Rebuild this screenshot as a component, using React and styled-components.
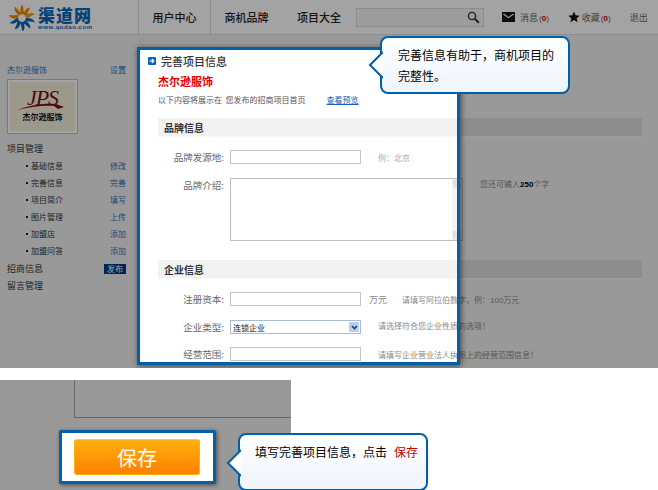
import React from 'react';
import styled, { createGlobalStyle } from 'styled-components';

const Global = createGlobalStyle`
  html, body { margin: 0; padding: 0; background: #fff; }
  body { font-family: "Noto Sans CJK SC", "Liberation Sans", sans-serif; width: 658px; height: 490px; overflow: hidden; }
  * { box-sizing: border-box; }
`;

const Shot = styled.div`position: relative; width: 658px; height: 368px; overflow: hidden;`;
const Page = styled.div`width: 658px; height: 368px; background: #f0f0f0;`;
const Dim = styled.div`position: absolute; inset: 0; background: rgba(0,0,0,.36);`;

const Header = styled.header`display: flex; align-items: stretch; height: 35px; background: #fff; border-bottom: 1px solid #ddd;`;
const Brand = styled.div`flex: none; display: flex; gap: 3px; width: 138px; padding: 5px 0 0 9px;`;
const BrandText = styled.div`display: flex; flex-direction: column;`;
const BrandName = styled.div`font-size: 17px; line-height: 17px; font-weight: 900; color: #0868b8; letter-spacing: 1px; margin-top: 1px;`;
const BrandUrl = styled.div`font-family: "Liberation Sans", sans-serif; font-size: 6px; line-height: 7px; margin-top: 1px; font-weight: 700; color: #0868b8; letter-spacing: .55px;`;
const NavItem = styled.div`flex: none; display: flex; align-items: center; justify-content: center; width: ${p => p.$w}px; border-left: ${p => p.$line ? '1px solid #ddd' : 'none'}; font-size: 11px; font-weight: 500; color: #222;`;
const SearchBox = styled.div`flex: none; display: flex; align-items: center; justify-content: flex-end; width: 128px; height: 19px; margin-top: 8px; padding-right: 3px; border: 1px solid #ddd; background: #f6f6f6;`;
const Tool = styled.div`flex: none; display: flex; align-items: center; gap: ${p => p.$gap || 0}px; margin-left: ${p => p.$ml}px; font-size: 9px; color: #666; white-space: nowrap;`;
const Count = styled.span`font-family: "Liberation Sans", sans-serif; font-size: 8px; margin-left: 1px; color: #666;`;
const Zero = styled.b`color: #d00000;`;

const Body = styled.div`display: flex;`;
const Side = styled.aside`flex: none; width: 140px; padding: 26px 14px 0 7px;`;
const SideRow = styled.div`display: flex; justify-content: space-between; align-items: center; height: 17px; margin-top: ${p => p.$mt || 0}px; padding-left: ${p => p.$sub ? 19 : 0}px; font-size: ${p => p.$sub ? 8 : 9}px; color: #333;`;
const Bullet = styled.span`display: flex; align-items: center; gap: 3px; &::before { content: ""; display: block; width: 2px; height: 2px; background: #222; }`;
const SideLink = styled.span`font-size: 8px; color: #3370b5;`;
const Badge = styled.span`display: flex; justify-content: center; align-items: center; width: 22px; height: 10px; font-size: 8px; background: #003a8c; color: #fff;`;
const LogoBox = styled.div`display: flex; align-items: center; justify-content: center; width: 71px; height: 55px; margin: 1px 0 6px; border: 1px solid #d8b8a8; background: #fff;`;
const LogoInner = styled.div`position: relative; display: flex; flex-direction: column; align-items: center; width: 65px; height: 49px; padding-top: 7px; background: #f5f0dc;`;
const LogoMark = styled.div`font-family: "Liberation Serif", serif; font-style: italic; font-size: 22px; line-height: 18px; letter-spacing: -1px; color: #7a1010;`;
const LogoSwoosh = styled.svg`position: absolute; left: 6px; top: 16px;`;
const LogoName = styled.div`font-size: 8px; line-height: 10px; font-weight: 700; color: #111; margin-top: 5px;`;

const Main = styled.main`padding: 83px 0 0 18px;`;

const FormWrap = styled.div`width: 484px;`;
const Section = styled.h3`display: flex; align-items: center; height: 19px; margin: 0; padding-left: 6px; background: ${p => p.$under ? '#dedede' : '#f2f2f2'}; border-bottom: 1px solid #f8f8f8; font-size: 10px; font-weight: 700; color: #333;`;
const Row = styled.div`display: flex; align-items: ${p => p.$start ? 'flex-start' : 'center'}; margin-top: ${p => p.$mt}px; height: ${p => p.$h || 14}px;`;
const Label = styled.label`flex: none; width: 66px; margin-right: 6px; text-align: right; font-size: 9.5px; line-height: 14px; color: #666; white-space: nowrap;`;
const Input = styled.div`flex: none; width: 131px; height: 14px; border: 1px solid #c4c4c4; background: #fff;`;
const Select = styled.div`flex: none; display: flex; align-items: center; justify-content: space-between; width: 131px; height: 14px; padding: 0 1px 0 2px; border: 1px solid #a8bcd4; background: #fff; font-size: 8px; color: #111;`;
const SelectBtn = styled.span`display: flex; align-items: center; justify-content: center; width: 10px; height: 10px; background: #b8cef0; border-radius: 1px;`;
const TextBox = styled.div`flex: none; position: relative; width: 233px; height: 63px; border: 1px solid #c0c0c0; background: #fff;`;
const Scroll = styled.div`position: absolute; top: 0; right: 0; bottom: 0; width: 10px; display: flex; flex-direction: column; justify-content: space-between; background: #f4f4f4;`;
const ScrollBtn = styled.span`display: block; height: 10px; background: #e2e2e2; border: 1px solid #eee;`;
const Unit = styled.span`flex: none; width: 18px; margin-left: 8px; font-size: 9px; color: #888;`;
const Hint = styled.span`flex: none; margin-left: ${p => p.$ml}px; margin-top: ${p => p.$mt || 0}px; font-size: 8px; color: ${p => p.$light ? '#aaa' : '#888'}; white-space: nowrap; visibility: ${p => p.$off ? 'hidden' : 'visible'};`;
const Strong = styled.b`font-family: "Liberation Sans", sans-serif; color: #000;`;
const Tight = styled.span`letter-spacing: -2px; margin-right: 2px;`;
const Num = styled.span`font-family: "Liberation Sans", sans-serif;`;

const Form = ({ under }) => {
  const t = s => (under ? '' : s);
  return (
    <FormWrap>
      <Section $under={under}>{t('品牌信息')}</Section>
      <Row $mt={13}><Label>{t('品牌发源地:')}</Label><Input /><Hint $ml={17} $light>{t('例：北京')}</Hint></Row>
      <Row $mt={14} $h={63} $start>
        <Label>{t('品牌介绍:')}</Label>
        <TextBox><Scroll><ScrollBtn /><ScrollBtn /></Scroll></TextBox>
        <Hint $ml={17} $off={!under}>您还可输入<Strong>250</Strong>个字</Hint>
      </Row>
      <Row $mt={19} $h={19}><Section as="div" $under={under} style={{ width: '100%' }}>{t('企业信息')}</Section></Row>
      <Row $mt={13}><Label>{t('注册资本:')}</Label><Input /><Unit>{t('万元')}</Unit><Hint $ml={15}>请填写阿拉伯数字<Tight>，</Tight>例<Tight>：</Tight><Num>100</Num>万元</Hint></Row>
      <Row $mt={14}>
        <Label>{t('企业类型:')}</Label>
        <Select>{t('连锁企业')}<SelectBtn><svg width="7" height="5" viewBox="0 0 7 5"><path d="M1 1l2.5 2.5L6 1" fill="none" stroke="#1a3a78" strokeWidth="1.6" /></svg></SelectBtn></Select>
        <Hint $ml={17} $mt={-3}>请选择符合您企业性质的选项！</Hint>
      </Row>
      <Row $mt={13}><Label>{t('经营范围:')}</Label><Input /><Hint $ml={17}>请填写企业营业法人执照上的经营范围信息！</Hint></Row>
    </FormWrap>
  );
};

const Modal = styled.section`position: absolute; left: 137px; top: 47px; width: 323px; height: 318px; padding: 5px 0 0 18px; overflow: hidden; background: #fff; border: 3px solid #0061a8; box-shadow: 1px 1px 6px rgba(0,0,0,.55);`;
const ModalHead = styled.div`display: flex; align-items: center; gap: 5px; height: 12px; margin-left: -10px; font-size: 11px; font-weight: 500; color: #333;`;
const Shop = styled.div`margin-top: 8px; font-size: 11px; line-height: 13px; font-weight: 700; color: #e00000;`;
const Desc = styled.div`display: flex; margin-top: 6px; margin-bottom: 13px; font-size: 8px; line-height: 11px; color: #555; white-space: pre;`;
const DescLink = styled.a`margin-left: 21px; color: #1a60b0; text-decoration: underline;`;

const Tip = styled.div`position: absolute; left: ${p => p.$x}px; top: ${p => p.$y}px; width: 190px; height: 58px; padding: ${p => p.$pad}; font-size: 12px; line-height: 21px; color: #000; white-space: ${p => p.$nowrap ? 'nowrap' : 'normal'}; background: linear-gradient(#fff, #eef5fd); border: 2px solid #0061a8; border-radius: 8px;`;
const TipArrow = styled.svg`position: absolute; left: -14px; top: ${p => p.$top}px;`;
const Red = styled.span`color: #c00000; margin-left: 7px;`;

const Gap = styled.div`height: 12px;`;
const Lower = styled.div`position: relative; height: 110px; padding-left: 74px; background: linear-gradient(#999, #999) no-repeat 0 0 / 291px 100%;`;
const Trace = styled.div`width: 217px; height: 38px; border-left: 1px solid #666; border-bottom: 1px solid #666;`;
const SaveFrame = styled.div`position: absolute; left: 59px; top: 50px; width: 157px; height: 54px; padding: 6px 0 0 12px; background: #fff; border: 3px solid #0061a8; border-radius: 2px; box-shadow: 1px 1px 4px rgba(0,0,0,.5);`;
const SaveBtn = styled.button`display: block; width: 126px; height: 36px; padding: 0; font: 400 20px "Noto Sans CJK SC", sans-serif; color: #fff; border: 1px solid #ffb000; border-top: 1px solid #ffd800; border-radius: 3px; background: linear-gradient(#ffb011, #ff7f00);`;

const Swirl = () => {
  const blades = [
    ['#f08a00', -100], ['#f08a00', -65], ['#f08a00', -30], ['#f0a000', 5],
    ['#0868b8', 40], ['#0868b8', 75], ['#0868b8', 110], ['#0868b8', 145], ['#0868b8', 180], ['#f08a00', 215],
  ];
  return (
    <svg width="26" height="26" viewBox="-13 -13 26 26">
      {blades.map(([c, a]) => (
        <path key={a} d="M3 -2.5 C6 -5 9 -7 12.5 -5 C10 -3.5 7 -1.5 4.5 .5 Z" fill={c} transform={`rotate(${a})`} />
      ))}
    </svg>
  );
};

const Mail = () => (
  <svg width="13" height="10" viewBox="0 0 13 10"><rect width="13" height="10" fill="#111" /><path d="M1.5 2l5 3.6 5-3.6" fill="none" stroke="#fff" strokeWidth="1.1" /></svg>
);
const Star = () => (
  <svg width="12" height="12" viewBox="0 0 24 24"><path d="M12 1l3.3 7.6 8.2.7-6.2 5.4 1.9 8L12 18l-7.2 4.7 1.9-8L.5 9.3l8.2-.7z" fill="#111" /></svg>
);
const Lens = () => (
  <svg width="13" height="13" viewBox="0 0 13 13"><circle cx="5" cy="5" r="3.6" fill="none" stroke="#333" strokeWidth="1.4" /><path d="M7.8 7.8l4 4" stroke="#333" strokeWidth="2" /></svg>
);
const ArrowBadge = () => (
  <svg width="8" height="8" viewBox="0 0 8 8"><rect width="8" height="8" rx="1" fill="#0a60c8" /><path d="M1.5 4h4M3.8 2l2 2-2 2" fill="none" stroke="#fff" strokeWidth="1.2" /></svg>
);
const Pointer = ({ top }) => (
  <TipArrow $top={top} width="15" height="28" viewBox="0 0 15 28">
    <path d="M15 1L2 14l13 13" fill="#fff" stroke="#0061a8" strokeWidth="2" />
  </TipArrow>
);

const subRows = [['基础信息', '修改'], ['完善信息', '完善'], ['项目简介', '填写'], ['图片管理', '上传'], ['加盟店', '添加'], ['加盟问答', '添加']];

export default function App() {
  return (
    <>
      <Global />
      <Shot>
        <Page>
          <Header>
            <Brand>
              <Swirl />
              <BrandText>
                <BrandName>渠道网</BrandName>
                <BrandUrl>www.qudao.com</BrandUrl>
              </BrandText>
            </Brand>
            <NavItem $w={72} $line>用户中心</NavItem>
            <NavItem $w={72} $line>商机品牌</NavItem>
            <NavItem $w={74}>项目大全</NavItem>
            <SearchBox><Lens /></SearchBox>
            <Tool $ml={18} $gap={5}><Mail /><span>消息<Count>(<Zero>0</Zero>)</Count></span></Tool>
            <Tool $ml={19} $gap={2}><Star /><span>收藏<Count>(<Zero>0</Zero>)</Count></span></Tool>
            <Tool $ml={19}>退出</Tool>
          </Header>
          <Body>
            <Side>
              <SideRow><SideLink>杰尔逊服饰</SideLink><SideLink>设置</SideLink></SideRow>
              <LogoBox>
                <LogoInner>
                  <LogoMark>JPS</LogoMark>
                  <LogoSwoosh width="52" height="14" viewBox="0 0 52 14">
                    <path d="M1 12C12 8 26 5 40 6l8 3-6 2-4-3C26 7 14 9 1 12z" fill="#7a1010" />
                  </LogoSwoosh>
                  <LogoName>杰尔逊服饰</LogoName>
                </LogoInner>
              </LogoBox>
              <SideRow>项目管理</SideRow>
              {subRows.map(([a, b]) => (
                <SideRow key={a} $sub><Bullet>{a}</Bullet><SideLink>{b}</SideLink></SideRow>
              ))}
              <SideRow $mt={1}>招商信息<Badge>发布</Badge></SideRow>
              <SideRow>留言管理</SideRow>
            </Side>
            <Main><Form under /></Main>
          </Body>
        </Page>
        <Dim />
        <Modal>
          <ModalHead><ArrowBadge />完善项目信息</ModalHead>
          <Shop>杰尔逊服饰</Shop>
          <Desc>以下内容将展示在  您发布的招商项目首页<DescLink>查看预览</DescLink></Desc>
          <Form />
        </Modal>
        <Tip $x={380} $y={36} $pad="6px 14px 0 16px">
          <Pointer top={13} />
          完善信息有助于，商机项目的完整性。
        </Tip>
      </Shot>
      <Gap />
      <Lower>
        <Trace />
        <SaveFrame><SaveBtn>保存</SaveBtn></SaveFrame>
        <Tip $x={238} $y={53} $pad="6px 8px 0 15px" $nowrap>
          <Pointer top={14} />
          填写完善项目信息，点击<Red>保存</Red>
        </Tip>
      </Lower>
    </>
  );
}
